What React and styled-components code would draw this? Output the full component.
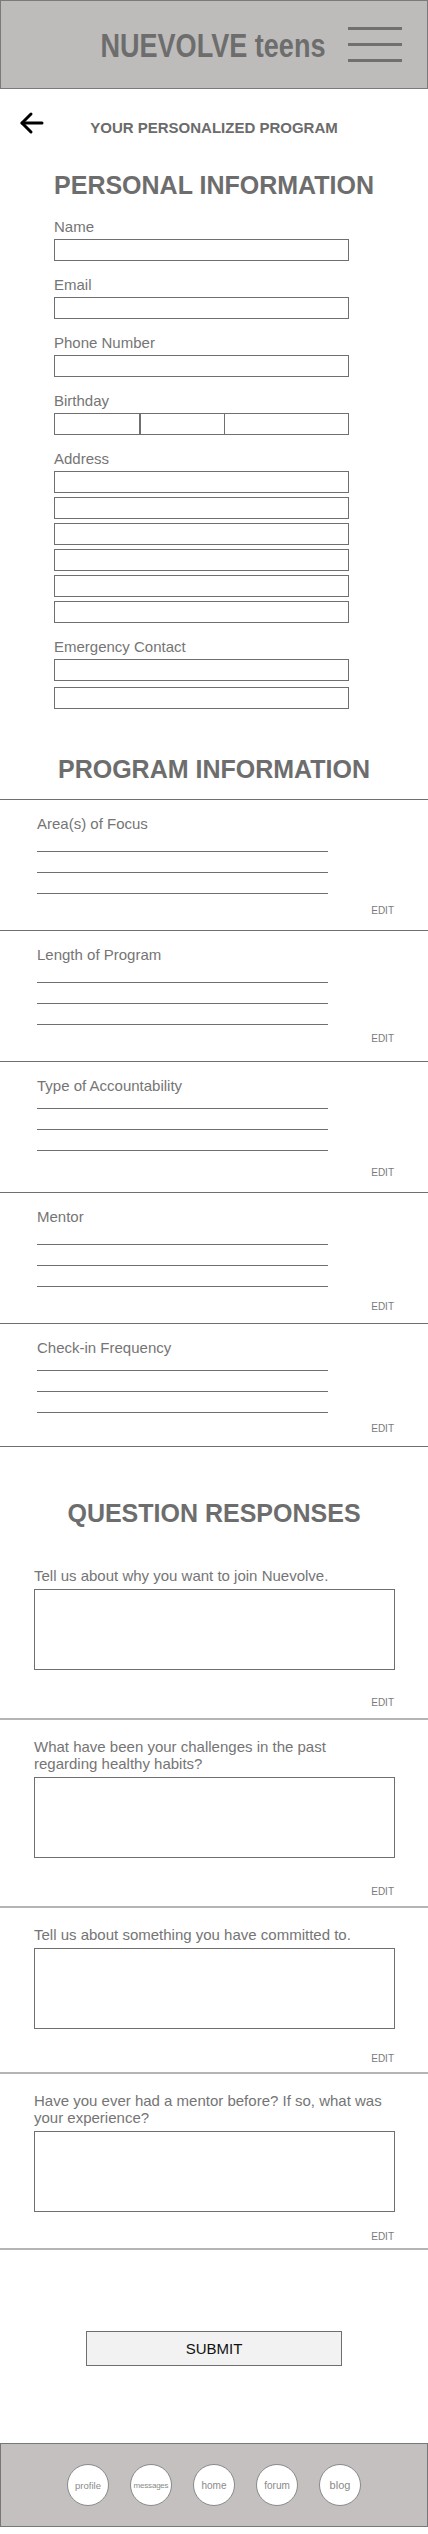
import React from 'react';
import styled, { createGlobalStyle } from 'styled-components';

const GlobalStyle = createGlobalStyle`
  * { box-sizing: border-box; }
  body {
    margin: 0;
    background: #ffffff;
    font-family: 'Liberation Sans', Arial, sans-serif;
  }
`;

const personalFields = [
  { label: 'Name', rows: 1 },
  { label: 'Email', rows: 1 },
  { label: 'Phone Number', rows: 1 },
  { label: 'Birthday', split: true },
  { label: 'Address', rows: 6, gap: 4 },
  { label: 'Emergency Contact', rows: 2, gap: 6 },
];

const programItems = [
  { label: 'Area(s) of Focus', linesTop: 20, editTop: 12, height: 131 },
  { label: 'Length of Program', linesTop: 20, editTop: 9, height: 131 },
  { label: 'Type of Accountability', linesTop: 15, editTop: 17, height: 131 },
  { label: 'Mentor', linesTop: 20, editTop: 15, height: 131 },
  { label: 'Check-in Frequency', linesTop: 15, editTop: 11, height: 123 },
];

const questions = [
  { text: 'Tell us about why you want to join Nuevolve.', editTop: 28, bottom: 10 },
  { text: 'What have been your challenges in the past regarding healthy habits?', editTop: 29, bottom: 9 },
  { text: 'Tell us about something you have committed to.', editTop: 25, bottom: 8 },
  { text: 'Have you ever had a mentor before? If so, what was your experience?', editTop: 20, bottom: 6 },
];

const navItems = [
  { label: 'profile', size: 9.5 },
  { label: 'messages', size: 8 },
  { label: 'home', size: 10 },
  { label: 'forum', size: 10 },
  { label: 'blog', size: 11 },
];

const BackArrow = () => (
  <svg width="26" height="26" viewBox="0 0 26 26" fill="none">
    <path d="M24 13H4" stroke="#000" strokeWidth="3" strokeLinecap="round" />
    <path d="M13 4L4 13L13 22" stroke="#000" strokeWidth="3" strokeLinecap="round" strokeLinejoin="round" />
  </svg>
);

const App = () => {
  return (
    <Page>
      <GlobalStyle />
      <Header>
        <Logo>NUEVOLVE teens</Logo>
        <Burger>
          <span />
          <span />
          <span />
        </Burger>
      </Header>

      <BackRow>
        <BackButton><BackArrow /></BackButton>
        <PageTitle>YOUR PERSONALIZED PROGRAM</PageTitle>
        <span />
      </BackRow>

      <SectionTitle $top={37}>PERSONAL INFORMATION</SectionTitle>
      <Fields>
        {personalFields.map((field) => (
          <Field key={field.label}>
            <FieldLabel>{field.label}</FieldLabel>
            {field.split ? (
              <SplitRow>
                <Box $w={86} />
                <Box $w={85} />
                <Box $w={124} $noLeft />
              </SplitRow>
            ) : (
              <BoxStack $gap={field.gap || 0}>
                {Array.from({ length: field.rows }).map((_, i) => (
                  <Box key={i} $w={295} />
                ))}
              </BoxStack>
            )}
          </Field>
        ))}
      </Fields>

      <SectionTitle $top={48}>PROGRAM INFORMATION</SectionTitle>
      <ProgramList>
        {programItems.map((item) => (
          <ProgramItem key={item.label} $h={item.height}>
            <ItemLabel>{item.label}</ItemLabel>
            <Lines $top={item.linesTop}>
              <Line />
              <Line />
              <Line />
            </Lines>
            <Edit $top={item.editTop}>EDIT</Edit>
          </ProgramItem>
        ))}
      </ProgramList>

      <SectionTitle $top={54}>QUESTION RESPONSES</SectionTitle>
      <QuestionList>
        {questions.map((q) => (
          <Question key={q.text} $bottom={q.bottom}>
            <QuestionLabel>{q.text}</QuestionLabel>
            <AnswerBox />
            <Edit $top={q.editTop}>EDIT</Edit>
          </Question>
        ))}
      </QuestionList>

      <SubmitButton>SUBMIT</SubmitButton>

      <Footer>
        {navItems.map((n) => (
          <NavCircle key={n.label} $size={n.size}>{n.label}</NavCircle>
        ))}
      </Footer>
    </Page>
  );
};

const Page = styled.div`
  width: 428px;
  padding-bottom: 7px;
  background: #ffffff;
`;

const Header = styled.header`
  height: 89px;
  border: 1px solid #7a7a7a;
  background: #bdbcbb;
  display: flex;
  align-items: center;
  justify-content: flex-end;
  padding-right: 25px;
`;

const Logo = styled.div`
  font-size: 33px;
  line-height: 33px;
  padding-top: 2px;
  font-weight: bold;
  color: #6d6d6d;
  white-space: nowrap;
  transform: scaleX(0.82);
  transform-origin: right center;
  margin-right: 23px;
`;

const Burger = styled.div`
  display: flex;
  flex-direction: column;
  gap: 13px;
  width: 54px;
  span {
    display: block;
    height: 3px;
    background: #707070;
  }
`;

const BackRow = styled.div`
  margin-top: 21px;
  height: 26px;
  display: grid;
  grid-template-columns: 1fr auto 1fr;
  align-items: center;
`;

const BackButton = styled.div`
  padding-left: 18px;
  height: 26px;
`;

const PageTitle = styled.div`
  font-size: 15px;
  line-height: 15px;
  padding-top: 8px;
  font-weight: bold;
  color: #6b6b6b;
`;

const SectionTitle = styled.h2`
  margin: ${(p) => p.$top}px 0 0;
  font-size: 25px;
  line-height: 25px;
  font-weight: bold;
  color: #6d6d6d;
  text-align: center;
`;

const Fields = styled.div`
  margin-top: 21px;
  padding-left: 54px;
  display: flex;
  flex-direction: column;
  gap: 16px;
`;

const Field = styled.div`
  display: flex;
  flex-direction: column;
`;

const FieldLabel = styled.div`
  font-size: 15px;
  line-height: 15px;
  color: #757575;
  margin-bottom: 5px;
`;

const BoxStack = styled.div`
  display: flex;
  flex-direction: column;
  gap: ${(p) => p.$gap}px;
`;

const SplitRow = styled.div`
  display: flex;
`;

const Box = styled.div`
  width: ${(p) => p.$w}px;
  height: 22px;
  border: 1px solid #6f6f6f;
  ${(p) => (p.$noLeft ? 'border-left: none;' : '')}
  background: #ffffff;
`;

const ProgramList = styled.div`
  margin-top: 17px;
  border-top: 1px solid #6f6f6f;
`;

const ProgramItem = styled.div`
  height: ${(p) => p.$h}px;
  padding-top: 16px;
  border-bottom: 1px solid #6f6f6f;
  display: flex;
  flex-direction: column;
`;

const ItemLabel = styled.div`
  padding-left: 37px;
  font-size: 15px;
  line-height: 15px;
  color: #757575;
`;

const Lines = styled.div`
  margin-top: ${(p) => p.$top}px;
  margin-left: 37px;
  width: 291px;
  display: flex;
  flex-direction: column;
  gap: 20px;
`;

const Line = styled.div`
  height: 1px;
  background: #6f6f6f;
`;

const Edit = styled.div`
  margin-top: ${(p) => p.$top}px;
  padding-right: 34px;
  text-align: right;
  font-size: 10px;
  line-height: 10px;
  color: #7a7a7a;
`;

const QuestionList = styled.div`
  margin-top: 23px;
`;

const Question = styled.div`
  padding: 18px 0 ${(p) => p.$bottom}px;
  border-bottom: 2px solid #b5b5b5;
`;

const QuestionLabel = styled.div`
  margin-left: 34px;
  max-width: 354px;
  font-size: 15px;
  line-height: 17px;
  color: #757575;
`;

const AnswerBox = styled.div`
  margin: 5px 0 0 34px;
  width: 361px;
  height: 81px;
  border: 1px solid #6f6f6f;
`;

const SubmitButton = styled.button`
  display: block;
  margin: 81px auto 0;
  width: 256px;
  height: 35px;
  padding: 0;
  border: 1px solid #6f6f6f;
  border-radius: 0;
  background: #f2f2f2;
  color: #111111;
  font-family: 'Liberation Sans', Arial, sans-serif;
  font-size: 15px;
`;

const Footer = styled.nav`
  margin-top: 77px;
  height: 84px;
  border: 1px solid #777777;
  background: #c3c0bf;
  display: flex;
  align-items: center;
  justify-content: center;
  gap: 21px;
`;

const NavCircle = styled.div`
  width: 42px;
  height: 42px;
  flex-shrink: 0;
  border-radius: 50%;
  border: 1px solid #8a8a8a;
  background: #ffffff;
  display: flex;
  align-items: center;
  justify-content: center;
  font-size: ${(p) => p.$size}px;
  letter-spacing: ${(p) => (p.$size < 9 ? '-0.2px' : '0')};
  color: #8a8a8a;
  white-space: nowrap;
`;

export default App;
